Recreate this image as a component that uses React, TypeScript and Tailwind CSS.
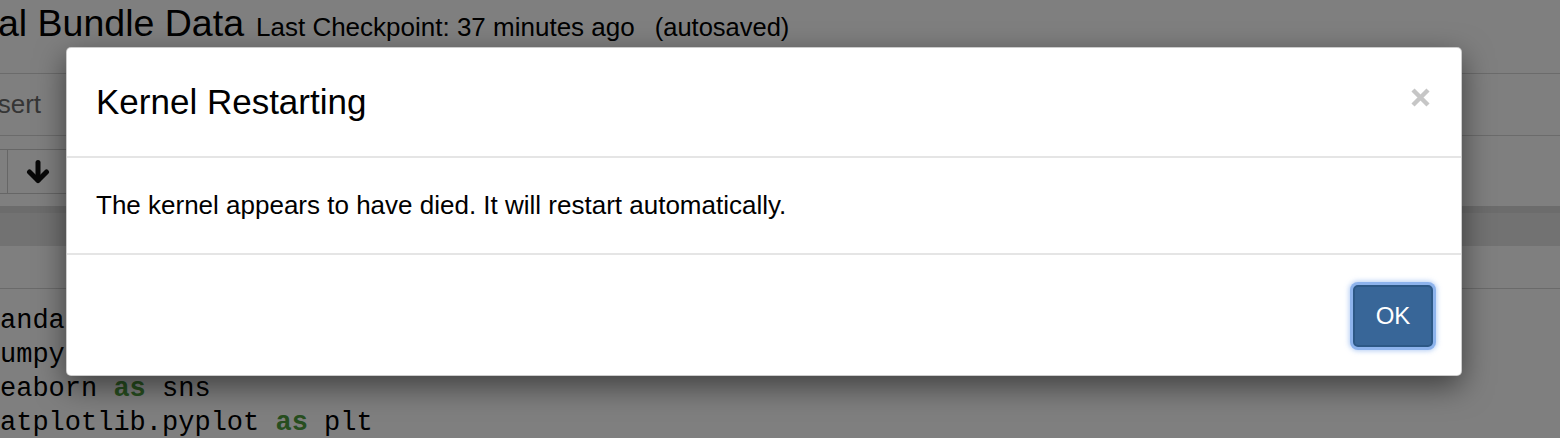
import { Fragment } from 'react'

const sans = "font-['Liberation_Sans',Arial,sans-serif]"
const mono = "font-['Liberation_Mono','Courier_New',monospace]"

const codeLines: [string, string][] = [
  ['andas', 'pd'],
  ['umpy', 'np'],
  ['eaborn', 'sns'],
  ['atplotlib.pyplot', 'plt'],
]

function DownArrow() {
  return (
    <svg width="24" height="24" viewBox="0 0 24 24" fill="none">
      <path d="M12 2.5V20" stroke="#111" strokeWidth="5" strokeLinecap="round" />
      <path d="M3.5 12L12 20.5L20.5 12" stroke="#111" strokeWidth="5" strokeLinecap="round" strokeLinejoin="round" />
    </svg>
  )
}

function CloseX() {
  return (
    <svg width="19" height="19" viewBox="0 0 19 19" className="mb-[9px]">
      <path d="M2 2L17 17M17 2L2 17" stroke="#c6c6c6" strokeWidth="4.4" />
    </svg>
  )
}

export default function App() {
  return (
    <div className={`relative w-full h-[438px] overflow-hidden bg-white ${sans}`}>
      {/* Notebook page behind the dialog */}
      <div className="h-[74px] border-b border-[#d6d6d6] flex items-baseline whitespace-nowrap">
        <span className="-ml-[2px] text-[37.5px] leading-[46px] text-black">al Bundle Data</span>
        <span className="ml-[12px] text-[26px] text-black">Last Checkpoint: 37 minutes ago</span>
        <span className="ml-[20px] text-[25.5px] text-black">(autosaved)</span>
      </div>

      <div className="h-[62px] border-b border-[#d6d6d6] flex items-center">
        <span className="-ml-[24px] text-[26px] text-[#6a6a6a]">Insert</span>
      </div>

      <div className="mt-[13px] flex -ml-[53px]">
        <div className="w-[61px] h-[45px] border border-[#cccccc] bg-white" />
        <div className="w-[61px] h-[45px] border border-l-0 border-[#cccccc] bg-white flex items-center justify-center">
          <DownArrow />
        </div>
      </div>

      <div className="mt-[12px] h-[40px] border-t-[7px] border-[#d8d8d8] bg-[#e4e4e4]" />

      <div className="mt-[42px] border-t border-[#d4d4d4] pt-[15px]">
        <div className={`${mono} text-[27px] leading-[34px] text-black whitespace-pre`}>
          {codeLines.map(([name, alias]) => (
            <div key={name}>
              {name} <span className="font-bold text-[#4e9c3e]">as</span> {alias}
            </div>
          ))}
        </div>
      </div>

      {/* Modal backdrop + dialog */}
      <div className="absolute inset-0 bg-black/50">
        <div className="ml-[66px] mt-[47px] w-[1396px] bg-white border border-black/20 rounded-[5px] shadow-[0_10px_30px_rgba(0,0,0,0.5)]">
          <div className="flex items-center justify-between pl-[29px] pr-[31px] pt-[29px] pb-[29px] border-b-2 border-[#e5e5e5]">
            <h4 className="text-[35px] leading-[50px] text-black">Kernel Restarting</h4>
            <CloseX />
          </div>
          <div className="px-[29px] py-[29px] border-b-2 border-[#e5e5e5]">
            <p className="text-[26px] leading-[37px] text-black">
              The kernel appears to have died. It will restart automatically.
            </p>
          </div>
          <div className="flex justify-end pr-[28px] pt-[30px] pb-[28px]">
            <button className="w-[80px] h-[62px] rounded-[5px] bg-[#386698] border-2 border-[#2c5886] text-white text-[24px] shadow-[0_0_0_3px_#8db3ec,0_0_5px_4px_rgba(120,165,235,0.55)]">
              OK
            </button>
          </div>
        </div>
      </div>
    </div>
  )
}
